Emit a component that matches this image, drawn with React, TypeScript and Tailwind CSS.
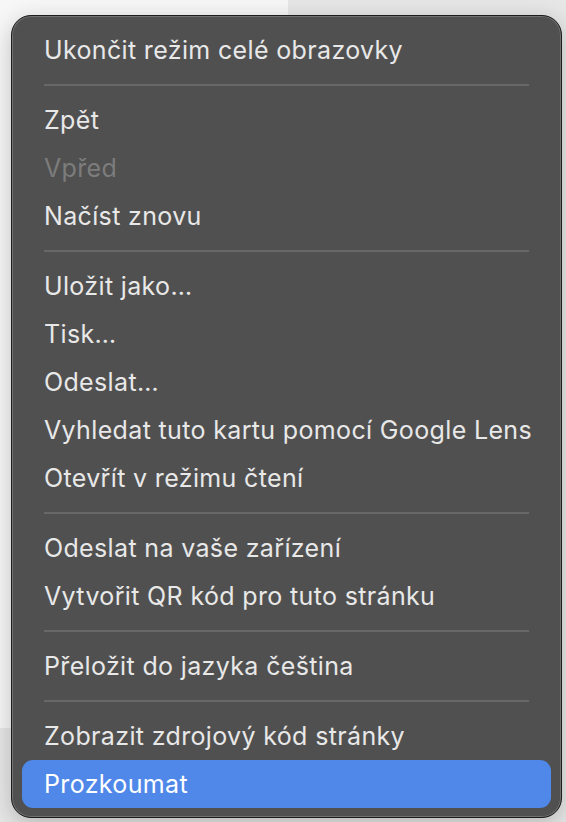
import React from "react";

type Entry =
  | { kind: "item"; label: string; disabled?: boolean; active?: boolean }
  | { kind: "sep" };

const entries: Entry[] = [
  { kind: "item", label: "Ukončit režim celé obrazovky" },
  { kind: "sep" },
  { kind: "item", label: "Zpět" },
  { kind: "item", label: "Vpřed", disabled: true },
  { kind: "item", label: "Načíst znovu" },
  { kind: "sep" },
  { kind: "item", label: "Uložit jako…" },
  { kind: "item", label: "Tisk…" },
  { kind: "item", label: "Odeslat…" },
  { kind: "item", label: "Vyhledat tuto kartu pomocí Google Lens" },
  { kind: "item", label: "Otevřít v režimu čtení" },
  { kind: "sep" },
  { kind: "item", label: "Odeslat na vaše zařízení" },
  { kind: "item", label: "Vytvořit QR kód pro tuto stránku" },
  { kind: "sep" },
  { kind: "item", label: "Přeložit do jazyka čeština" },
  { kind: "sep" },
  { kind: "item", label: "Zobrazit zdrojový kód stránky" },
  { kind: "item", label: "Prozkoumat", active: true },
];

export default function App() {
  return (
    <div
      className="relative w-[566px] h-[822px] overflow-hidden bg-[#e7e7e7]"
      style={{ fontFamily: "Inter, 'Noto Sans', sans-serif" }}
    >
      {/* page behind the menu */}
      <div className="w-[288px] h-[728px] bg-[#f7f7f7]" />

      {/* context menu */}
      <div className="absolute left-[11px] top-[15px] w-[551px] h-[803px] rounded-[20px] border border-[#1d1d1d] bg-[#505050] shadow-[inset_0_0_0_1px_#727272,0_6px_24px_rgba(0,0,0,0.22)] px-[10px] pt-[10px] pb-[9px] flex flex-col">
        {entries.map((e, i) =>
          e.kind === "sep" ? (
            <div key={i} className="h-[22px] flex items-center px-[22px]">
              <div className="h-[2px] w-full bg-[#686868]" />
            </div>
          ) : (
            <div
              key={i}
              className={
                "h-[48px] flex items-center px-[22px] rounded-[11px] text-[25px] leading-none tracking-[0.35px] " +
                (e.active
                  ? "bg-[#4f88e8] text-white"
                  : e.disabled
                  ? "text-[#7c7c7c]"
                  : "text-[#e8e8e8]")
              }
            >
              <span className="whitespace-nowrap">{e.label}</span>
            </div>
          )
        )}
      </div>
    </div>
  );
}
